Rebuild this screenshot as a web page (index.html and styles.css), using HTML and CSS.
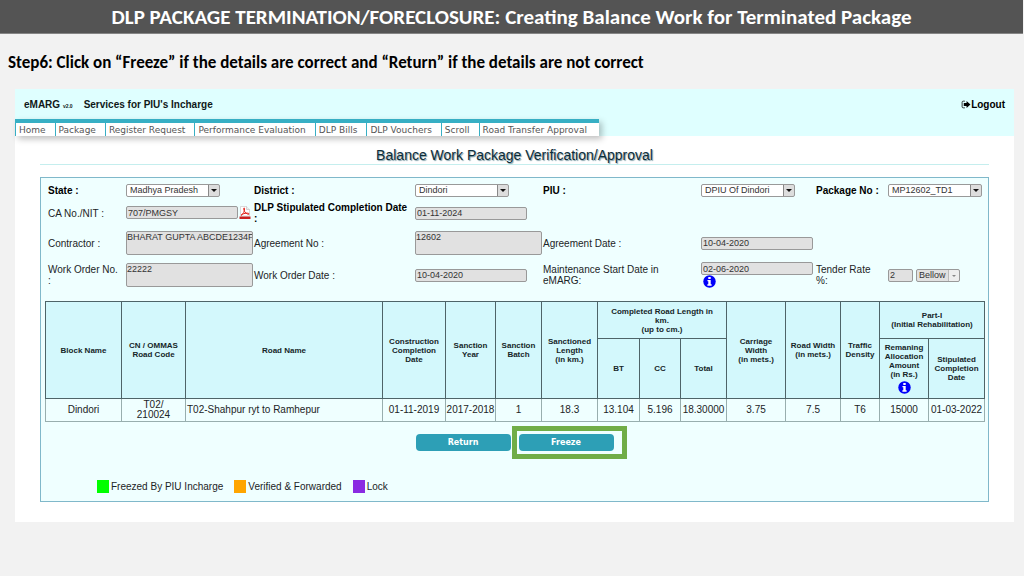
FILE: index.html
```html
<!DOCTYPE html>
<html lang="en">
<head>
<meta charset="utf-8">
<title>Balance Work Package Verification/Approval</title>
<link rel="stylesheet" href="styles.css">
</head>
<body>
<svg class="symbols" aria-hidden="true">
  <symbol id="info" viewBox="0 0 14 14">
    <circle cx="7" cy="7" r="6.7" fill="#0000fa"/>
    <path d="M5.7 2.2h2.6v2H5.7zM4.8 5.3h3.5v4.6h1v1.6H4.7V9.9h1V6.8h-.9z" fill="#fff"/>
  </symbol>
</svg>

<header class="slide-title"><h1>DLP PACKAGE TERMINATION/FORECLOSURE: Creating Balance Work for Terminated Package</h1></header>
<p class="step">Step6: Click on “Freeze” if the details are correct and “Return” if the details are not correct</p>

<div class="app">
  <header class="app-header">
    <div class="brand-row">
      <span class="brand">eMARG <small>v2.0</small></span>
      <span class="services">Services for PIU's Incharge</span>
      <a class="logout" href="#"><svg viewBox="0 0 18 16" aria-hidden="true"><path d="M7 2H4Q2 2 2 4v8q0 2 2 2h3" fill="none" stroke="#111" stroke-width="1.5"/><path d="M5 5.3h5V1.5L17 8l-7 6.500v-3.800H5z" fill="#000"/></svg>Logout</a>
    </div>
    <nav class="menu">
      <a href="#">Home</a><a href="#">Package</a><a href="#">Register Request</a><a href="#">Performance Evaluation</a><a href="#">DLP Bills</a><a href="#">DLP Vouchers</a><a href="#">Scroll</a><a href="#">Road Transfer Approval</a>
    </nav>
  </header>

  <main class="content">
    <h2>Balance Work Package Verification/Approval</h2>
    <form class="panel">
      <div class="fields">
        <label class="key" for="state">State :</label>
        <div><select id="state"><option>Madhya Pradesh</option></select></div>
        <label class="key" for="district">District :</label>
        <div><select id="district"><option>Dindori</option></select></div>
        <label class="key" for="piu">PIU :</label>
        <div><select id="piu"><option>DPIU Of Dindori</option></select></div>
        <label class="key" for="package">Package No :</label>
        <div><select id="package"><option>MP12602_TD1</option></select></div>

        <label for="ca">CA No./NIT :</label>
        <div class="with-file"><input id="ca" type="text" value="707/PMGSY" readonly>
          <a href="#" aria-label="Open PDF"><svg class="pdf" viewBox="0 0 12 14" aria-hidden="true"><path d="M1.500 .5h6L10.500 3.500V10h-9z" fill="#fff" stroke="#ccc" stroke-width=".7"/><path d="M7.500 .5v3h3" fill="#eee" stroke="#bbb" stroke-width=".6"/><path d="M2 9.300C4 8.500 6 5 5.500 2.300C5 1 4.300 2.500 5 4.200C5.800 6.500 7.500 8 9.500 8.300C11 8.300 10 7 7.500 7.100C5.500 7.300 3.500 8 2 9.300z" fill="none" stroke="#e3231b" stroke-width="1"/><path d="M.5 10.500h11V13H.5z" fill="#c91f1f"/></svg></a></div>
        <label class="key" for="dlp">DLP Stipulated Completion Date :</label>
        <div class="span-five"><input id="dlp" type="text" value="01-11-2024" readonly></div>

        <label for="contractor">Contractor :</label>
        <div><textarea id="contractor" readonly>BHARAT GUPTA ABCDE1234F</textarea></div>
        <label for="agno">Agreement No :</label>
        <div><textarea id="agno" readonly>12602</textarea></div>
        <label for="agdate">Agreement Date :</label>
        <div class="span-three"><input id="agdate" type="text" value="10-04-2020" readonly></div>

        <label for="wono">Work Order No. :</label>
        <div><textarea id="wono" readonly>22222</textarea></div>
        <label for="wodate">Work Order Date :</label>
        <div><input id="wodate" type="text" value="10-04-2020" readonly></div>
        <label for="mstart">Maintenance Start Date in eMARG:</label>
        <div class="stacked"><input id="mstart" type="text" value="02-06-2020" readonly><svg class="info"><use href="#info"/></svg></div>
        <label for="rate">Tender Rate %:</label>
        <div class="rate"><input id="rate" type="text" value="2" readonly><select aria-label="Tender rate direction" disabled><option>Bellow</option></select></div>
      </div>

      <table>
        <colgroup><col class="w-block"><col class="w-code"><col class="w-road"><col class="w-done"><col class="w-year"><col class="w-batch"><col class="w-length"><col class="w-bt"><col class="w-cc"><col class="w-total"><col class="w-carriage"><col class="w-width"><col class="w-traffic"><col class="w-amount"><col class="w-date"></colgroup>
        <thead>
          <tr class="group-row">
            <th rowspan="2">Block Name</th><th rowspan="2">CN / OMMAS<br>Road Code</th><th rowspan="2">Road Name</th>
            <th rowspan="2">Construction<br>Completion<br>Date</th><th rowspan="2">Sanction<br>Year</th><th rowspan="2">Sanction<br>Batch</th>
            <th rowspan="2">Sanctioned<br>Length<br>(in km.)</th><th colspan="3">Completed Road Length in<br>km.<br>(up to cm.)</th>
            <th rowspan="2">Carriage<br>Width<br>(in mets.)</th><th rowspan="2">Road Width<br>(in mets.)</th><th rowspan="2">Traffic<br>Density</th>
            <th colspan="2">Part-I<br>(Initial Rehabilitation)</th>
          </tr>
          <tr class="sub-row">
            <th>BT</th><th>CC</th><th>Total</th>
            <th>Remaning<br>Allocation<br>Amount<br>(in Rs.)<svg class="info"><use href="#info"/></svg></th><th>Stipulated<br>Completion<br>Date</th>
          </tr>
        </thead>
        <tbody>
          <tr><td>Dindori</td><td>T02/<br>210024</td><td class="road">T02-Shahpur ryt to Ramhepur</td><td>01-11-2019</td><td>2017-2018</td><td>1</td><td>18.3</td><td>13.104</td><td>5.196</td><td>18.30000</td><td>3.75</td><td>7.5</td><td>T6</td><td>15000</td><td>01-03-2022</td></tr>
        </tbody>
      </table>

      <div class="actions">
        <button type="button">Return</button>
        <div class="highlight"><button type="button">Freeze</button></div>
      </div>

      <ul class="legend">
        <li><i class="swatch frozen"></i>Freezed By PIU Incharge</li>
        <li><i class="swatch verified"></i>Verified &amp; Forwarded</li>
        <li><i class="swatch lock"></i>Lock</li>
      </ul>
    </form>
  </main>
</div>
</body>
</html>
```

FILE: styles.css
```css
* { box-sizing: border-box; }

body {
  margin: 0;
  background: #f2f2f2;
  color: #1c2426;
  font: 10px/11px "Liberation Sans", Arial, sans-serif;
}

a { color: inherit; text-decoration: none; }
.symbols { display: none; }

.slide-title {
  margin-right: 1px;
  padding: 5px 0 4px;
  background: #545454;
  border-bottom: 1px solid #858585;
  color: #fff;
  text-align: center;
}
.slide-title h1 {
  margin: 0;
  font: bold 21px/24px Calibri, Carlito, Lato, sans-serif;
}
.step {
  margin: 0;
  padding: 19px 8px 16px;
  color: #000;
  font: bold 17px/20px Calibri, Carlito, Lato, sans-serif;
}

.app { margin: 0 10px 0 15px; background: #fff; }
.app-header { background: #dfffff; }
.brand-row {
  display: flex;
  align-items: baseline;
  padding: 10px 9px 7px;
  color: #101818;
  font-weight: bold;
  line-height: 12px;
}
.brand small { font-size: 5px; }
.services { margin-left: 11px; }
.logout { margin-left: auto; color: #000; }
.logout svg { width: 10px; height: 9px; vertical-align: -1px; }

.menu {
  display: flex;
  width: fit-content;
  background: #fff;
  border-top: 4px solid #37afc4;
  box-shadow: 3px 3px 6px rgba(0, 0, 0, .25);
  color: #555;
  font: 9px/12px "DejaVu Sans", Verdana, sans-serif;
}
.menu a { padding: 1px 9px 0 3px; border-left: 1px solid #37afc4; }
.menu a:last-child { padding-right: 12px; }

.content { padding: 12px 25px 20px; }
h2 {
  margin: 0 0 12px;
  padding-bottom: 1px;
  border-bottom: 1px solid #c5eeee;
  color: #0e2c38;
  font: 14px/15px "Liberation Sans", Arial, sans-serif;
  text-align: center;
  text-shadow: 1px 1px 1px #7d9ca5;
}
.panel {
  padding: 0 4px 8px;
  background: #efffff;
  border: 1px solid #80b8ca;
}

.fields {
  display: grid;
  grid-template-columns: 78fr 128fr 161fr 128fr 158fr 115fr 72fr 96fr;
  grid-template-rows: minmax(24px, auto) minmax(22px, auto) minmax(38px, auto) minmax(26px, auto);
  align-items: center;
  padding: 0 0 13px 3px;
}
.fields > label { padding-right: 4px; }
.fields > div { display: flex; }
.fields > .span-three { grid-column: span 3; }
.fields > .span-five { grid-column: span 5; }
.key { color: #000; font-weight: bold; }

input, textarea, select {
  display: block;
  margin: 0;
  border: 1px solid #999;
  border-radius: 2px;
  background: #e1e1e1;
  color: #333;
  font: 9px/10px "Liberation Sans", Arial, sans-serif;
}
input { width: 112px; height: 13px; padding: 0 1px; }
textarea { width: 127px; height: 24px; padding: 0; resize: none; overflow: hidden; white-space: pre; }
select {
  width: 94px;
  height: 13px;
  padding: 0 12px 0 3px;
  appearance: none;
  background: #fff url("data:image/svg+xml,%3Csvg xmlns='http://www.w3.org/2000/svg' width='11' height='11'%3E%3Cpath d='M0 0h11v11H0z' fill='%23ddd'/%3E%3Cpath d='M.5 0v11' stroke='%23888'/%3E%3Cpath d='M3 4h6L6 7z' fill='%23111'/%3E%3C/svg%3E") right center no-repeat;
}
select:disabled {
  width: 44px;
  padding: 0 11px 0 2px;
  opacity: 1;
  background: #e1e1e1 url("data:image/svg+xml,%3Csvg xmlns='http://www.w3.org/2000/svg' width='11' height='11'%3E%3Cpath d='M0 0h11v11H0z' fill='%23eee'/%3E%3Cpath d='M.5 0v11' stroke='%23bbb'/%3E%3Cpath d='M4 5h4L6 7z' fill='%23888'/%3E%3C/svg%3E") right center no-repeat;
}
.with-file { gap: 1px; }
.pdf { display: block; width: 12px; height: 14px; }
.info { display: block; width: 13px; height: 13px; }
.stacked { flex-direction: column; }
.stacked .info { margin-left: 2px; }
.rate { gap: 3px; }
.rate input { width: 25px; }

table {
  width: 100%;
  table-layout: fixed;
  border-collapse: collapse;
}
th, td { padding: 0; text-align: center; }
th {
  background: #d3f8fc;
  border: 1px solid #4e6468;
  color: #162629;
  font-size: 8px;
  line-height: 9px;
}
td { height: 23px; border: 1px solid #98aeae; line-height: 10px; white-space: nowrap; }
td.road { padding-left: 1px; text-align: left; }
.group-row { height: 37px; }
.sub-row { height: 60px; }
th .info { margin: 2px auto 0; }
.w-block { width: 76px; }
.w-code { width: 64px; }
.w-road { width: 197px; }
.w-done { width: 63px; }
.w-year { width: 50px; }
.w-batch { width: 46px; }
.w-length { width: 56px; }
.w-bt { width: 42px; }
.w-cc { width: 41px; }
.w-total { width: 46px; }
.w-carriage { width: 59px; }
.w-width { width: 55px; }
.w-traffic { width: 39px; }
.w-amount { width: 49px; }
.w-date { width: 56px; }

.actions {
  display: flex;
  justify-content: center;
  align-items: center;
  gap: 1px;
  padding: 4px 0 0 13px;
}
button {
  display: block;
  width: 95px;
  height: 17px;
  padding: 0;
  border: 0;
  border-radius: 4px;
  background: #2d9fb6;
  color: #fff;
  font: bold 8px/16px "DejaVu Sans", Verdana, sans-serif;
}
.highlight { padding: 3px 8px 3px 2px; border: 5px solid #70ad47; }

.legend {
  display: flex;
  gap: 11px;
  margin: 0;
  padding: 21px 0 0 52px;
  list-style: none;
}
.legend li { display: flex; align-items: center; gap: 2px; }
.swatch { width: 12px; height: 13px; }
.frozen { background: #0f0; }
.verified { background: #ffa500; }
.lock { background: #8a2be2; }
```
